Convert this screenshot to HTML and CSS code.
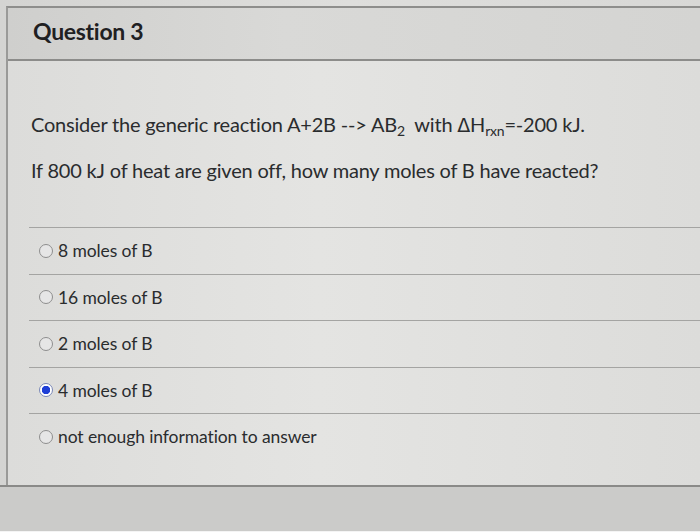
FILE: index.html
```html
<!DOCTYPE html>
<html>
<head>
<meta charset="utf-8">
<link rel="stylesheet" href="styles.css">
</head>
<body>
<div class="page">
  <div class="panel">
    <div class="header"><h2 class="title">Question 3</h2></div>
    <div class="content">
      <p class="qline first">Consider the generic reaction A+2B --&gt; AB<sub>2</sub>&nbsp; with <span class="delta">&Delta;</span>H<sub>rxn</sub>=-200 kJ.</p>
      <p class="qline">If 800 kJ of heat are given off, how many moles of B have reacted?</p>
      <ul class="answers">
        <li class="answer"><span class="radio"></span><span>8 moles of B</span></li>
        <li class="answer"><span class="radio"></span><span>16 moles of B</span></li>
        <li class="answer"><span class="radio"></span><span>2 moles of B</span></li>
        <li class="answer"><span class="radio checked"></span><span>4 moles of B</span></li>
        <li class="answer"><span class="radio"></span><span>not enough information to answer</span></li>
      </ul>
    </div>
  </div>
  <div class="footer"></div>
</div>
</body>
</html>
```
FILE: styles.css
```css
html, body {
  margin: 0;
  padding: 0;
}
body {
  background: #dadad8;
  font-family: Lato, "Noto Sans", sans-serif;
  color: #2a2c2e;
  width: 700px;
  height: 532px;
  overflow: hidden;
}
.page {
  padding: 6px 0 0 6px;
  background: linear-gradient(90deg, #d4d4d2, #dededc 50%, #d8d8d6);
}
.panel {
  border-top: 2px solid #8e8e8c;
  border-left: 2px solid #9a9a98;
  height: 477px;
}
.header {
  height: 51px;
  background: linear-gradient(90deg, #cfcfcd, #d9d9d7 40%, #d4d4d2);
  border-bottom: 2px solid #8c8c8a;
  display: flex;
  align-items: center;
  padding-left: 25px;
}
.title {
  margin: -5px 0 0 0;
  font-size: 23px;
  font-weight: 700;
  color: #1f2022;
  letter-spacing: -0.3px;
}
.content {
  background: linear-gradient(90deg, #dcdcda, #e4e4e2 45%, #dcdcda);
  height: 424px;
  padding-left: 21px;
}
.qline {
  margin: 0;
  font-size: 20px;
  line-height: 24px;
  letter-spacing: -0.2px;
  padding-left: 2px;
}
.qline.first {
  padding-top: 51px;
  margin-bottom: 21px;
}
.qline sub {
  font-size: 14px;
  line-height: 0;
  vertical-align: -4px;
}
.delta {
  font-family: "DejaVu Sans", sans-serif;
  font-size: 19px;
}
.answers {
  list-style: none;
  margin: 45px 0 0 0;
  padding: 0;
  border-top: 1px solid #a4a4a2;
}
.answer {
  height: 45.5px;
  border-bottom: 1px solid #a4a4a2;
  display: flex;
  align-items: center;
  gap: 5px;
  padding-left: 10px;
  font-size: 17.5px;
  letter-spacing: -0.1px;
}
.answer:last-child {
  border-bottom: none;
}
.radio {
  width: 12px;
  height: 12px;
  border-radius: 50%;
  border: 1px solid #8e8e8e;
  background: #e6e6e6;
  flex: none;
}
.radio.checked {
  background: radial-gradient(circle, #1f3fd6 0 4px, #ffffff 4.5px);
  border-color: #7a88b8;
}
.footer {
  border-top: 2px solid #8a8a88;
  height: 44px;
  margin-left: -6px;
  background: #cbcbc9;
  border-bottom: 2px solid #f4f4f4;
}
```
